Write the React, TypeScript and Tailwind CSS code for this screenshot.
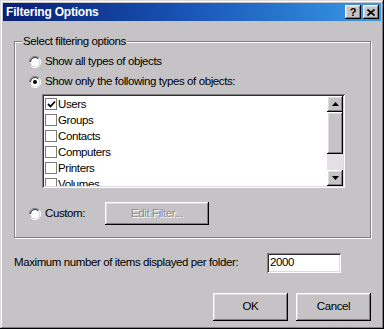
import React from "react";

const raised =
  "shadow-[inset_-1px_-1px_0_#000,inset_1px_1px_0_#fff,inset_-2px_-2px_0_#808080,inset_2px_2px_0_#dcdadc]";
const sunken =
  "shadow-[inset_1px_1px_0_#808080,inset_-1px_-1px_0_#fff,inset_2px_2px_0_#303030,inset_-2px_-2px_0_#dcdadc]";

const Radio: React.FC<{ checked?: boolean }> = ({ checked }) => (
  <svg width="12" height="12" viewBox="0 0 12 12" className="shrink-0">
    <path d="M0.5 6 A5.5 5.5 0 0 1 10 2" fill="none" stroke="#808080" />
    <path d="M10 2 A5.5 5.5 0 0 1 2 10" fill="none" stroke="#ffffff" />
    <circle cx="6" cy="6" r="4.5" fill="#fff" />
    <path d="M1.5 6 A4.5 4.5 0 0 1 9.2 2.8" fill="none" stroke="#303030" />
    {checked && <circle cx="6" cy="6" r="2" fill="#000" />}
  </svg>
);

const Check: React.FC<{ checked?: boolean }> = ({ checked }) => (
  <span className="w-[12px] h-[12px] border border-[#7c7a7e] bg-white shrink-0 flex items-center justify-center">
    {checked && (
      <svg width="9" height="9" viewBox="0 0 9 9">
        <path d="M1 4 L3.5 6.5 L8 1.5" fill="none" stroke="#000" strokeWidth="1.8" />
      </svg>
    )}
  </span>
);

const Arrow: React.FC<{ up?: boolean }> = ({ up }) => (
  <div className={`w-[16px] h-[16px] bg-[#c5c3c6] flex items-center justify-center ${raised}`}>
    <svg width="7" height="4" viewBox="0 0 7 4">
      <path d={up ? "M3.5 0 L7 4 L0 4 Z" : "M0 0 L7 0 L3.5 4 Z"} fill="#000" />
    </svg>
  </div>
);

const items = ["Users", "Groups", "Contacts", "Computers", "Printers", "Volumes"];

export default function App() {
  return (
    <div
      className={`w-[384px] h-[329px] bg-[#c5c3c6] p-[3px] flex flex-col text-[11.5px] tracking-[-0.4px] whitespace-nowrap text-black font-['Liberation_Sans',Arial,sans-serif] shadow-[inset_-1px_-1px_0_#000,inset_1px_1px_0_#dcdadc,inset_-2px_-2px_0_#808080,inset_2px_2px_0_#fff]`}
    >
      {/* title bar */}
      <div className="h-[18px] flex items-center justify-between pl-[3px] pr-[2px] bg-gradient-to-r from-[#0a1f74] via-[#1a56b8] to-[#3a9ae6]">
        <span className="text-white font-bold text-[12px] tracking-[-0.2px]">Filtering Options</span>
        <div className="flex gap-[2px]">
          <div className={`w-[16px] h-[14px] bg-[#c5c3c6] flex items-center justify-center font-bold text-[11px] leading-none ${raised}`}>
            ?
          </div>
          <div className={`w-[16px] h-[14px] bg-[#c5c3c6] flex items-center justify-center ${raised}`}>
            <svg width="8" height="7" viewBox="0 0 8 7">
              <path d="M0.5 0.5 L7.5 6.5 M7.5 0.5 L0.5 6.5" stroke="#000" strokeWidth="1.6" />
            </svg>
          </div>
        </div>
      </div>

      <div className="flex flex-col pl-[11px] pr-[10px] pt-[20px]">
        {/* group box */}
        <div className="relative border border-[#808080] shadow-[inset_1px_1px_0_#fff,1px_1px_0_#fff] pl-[14px] pt-[10px] pb-[12px]">
          <span className="absolute top-[-8px] left-[7px] px-[1px] bg-[#c5c3c6] leading-[14px]">
            Select filtering options
          </span>
          <div className="h-[20px] flex items-center gap-[4px]">
            <Radio />
            <span>Show all types of objects</span>
          </div>
          <div className="h-[20px] flex items-center gap-[4px]">
            <Radio checked />
            <span>Show only the following types of objects:</span>
          </div>
          <div className={`mt-[2px] ml-[13px] w-[303px] h-[94px] bg-white p-[2px] flex ${sunken}`}>
            <div className="flex-1 overflow-hidden">
              {items.map((it, i) => (
                <div key={it} className="h-[16px] flex items-center gap-[1px] pl-[1px]">
                  <Check checked={i === 0} />
                  <span className="leading-[16px]">{it}</span>
                </div>
              ))}
            </div>
            <div className="w-[16px] flex flex-col">
              <Arrow up />
              <div className={`h-[42px] bg-[#c5c3c6] ${raised}`} />
              <div className="flex-1 bg-[#e2e0e4]" />
              <Arrow />
            </div>
          </div>
          <div className="mt-[14px] h-[23px] flex items-center">
            <Radio />
            <span className="ml-[4px] w-[60px]">Custom:</span>
            <div
              className={`w-[104px] h-[23px] flex items-center justify-center text-[#8c8a8e] [text-shadow:1px_1px_0_#fff] ${raised}`}
            >
              Edit Filter...
            </div>
          </div>
        </div>

        <div className="mt-[15px] h-[20px] flex items-center">
          <span className="w-[253px]">Maximum number of items displayed per folder:</span>
          <div className={`w-[74px] h-[20px] bg-white flex items-center pl-[3px] ${sunken}`}>2000</div>
        </div>

        <div className="mt-[20px] flex justify-end gap-[8px]">
          <div className={`w-[75px] h-[28px] flex items-center justify-center ${raised}`}>OK</div>
          <div className={`w-[75px] h-[28px] flex items-center justify-center ${raised}`}>Cancel</div>
        </div>
      </div>
    </div>
  );
}
